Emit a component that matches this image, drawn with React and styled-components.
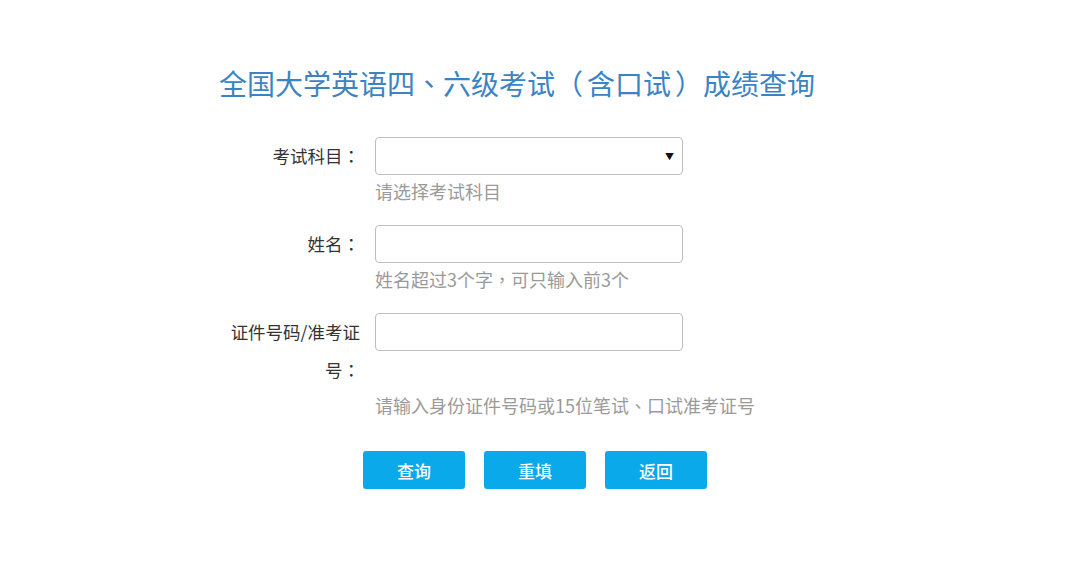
import React from 'react';
import styled, { createGlobalStyle } from 'styled-components';

const GlobalStyle = createGlobalStyle`
  html, body {
    margin: 0;
    padding: 0;
    background: #fff;
  }
  body {
    font-family: "Noto Sans CJK SC", "Liberation Sans", sans-serif;
  }
`;

// centred full-width punctuation, as in the reference's font
const Punct = styled.span`
  font-family: "Noto Sans CJK TC", "Noto Sans CJK SC", sans-serif;
  line-height: 1;
`;

// full-width brackets get a little air on their inner side
const Paren = styled.span`
  ${p => (p.$close ? 'padding-left: 4px;' : 'padding-right: 4px;')}
`;

const Page = styled.div`
  width: 640px;
  margin: 0 auto;
  padding-top: 63px;
`;

const Title = styled.h1`
  margin: 0 0 34px -1px;
  height: 40px;
  font-size: 28px;
  line-height: 40px;
  font-weight: 400;
  color: #3b84c4;
  white-space: nowrap;
`;

const Row = styled.div`
  display: grid;
  grid-template-columns: 140px 308px;
  column-gap: 15px;
  align-items: start;
`;

const Label = styled.label`
  text-align: right;
  font-size: 17.5px;
  line-height: 38px;
  color: #333;
`;

const Field = styled.div`
  position: relative;
`;

const Input = styled.input`
  box-sizing: border-box;
  display: block;
  width: 100%;
  height: 38px;
  border: 1px solid #bdbdbd;
  border-radius: 4px;
  padding: 0 10px;
  font-size: 16px;
  outline: none;
  background: #fff;
`;

const Select = styled.select`
  box-sizing: border-box;
  display: block;
  width: 100%;
  height: 38px;
  border: 1px solid #bdbdbd;
  border-radius: 4px;
  padding: 0 10px;
  font-size: 16px;
  background: #fff;
  appearance: none;
  outline: none;
`;

const Arrow = styled.span`
  position: absolute;
  right: 9px;
  top: 50%;
  transform: translateY(-50%);
  font-size: 9px;
  color: #111;
  pointer-events: none;
`;

const Hint = styled.div`
  height: 20px;
  margin: 6px 0 ${p => p.$after}px 155px;
  font-size: 18px;
  line-height: 20px;
  color: #9a9a9a;
  white-space: nowrap;
`;

const Buttons = styled.div`
  display: flex;
  gap: 19px;
  padding-left: 143px;
`;

const Button = styled.button`
  width: 102px;
  height: 38px;
  border: none;
  border-radius: 3px;
  background: #0aa9ea;
  color: #fff;
  font-family: inherit;
  font-size: 17px;
  font-weight: 500;
  cursor: pointer;
`;

export default function App() {
  return (
    <>
      <GlobalStyle />
      <Page>
        <Title>
          全国大学英语四<Punct>、</Punct>六级考试<Paren>（</Paren>含口试<Paren $close>）</Paren>成绩查询
        </Title>

        <Row>
          <Label>考试科目<Punct>：</Punct></Label>
          <Field>
            <Select defaultValue="">
              <option value=""></option>
            </Select>
            <Arrow>▼</Arrow>
          </Field>
        </Row>
        <Hint $after={24}>请选择考试科目</Hint>

        <Row>
          <Label>姓名<Punct>：</Punct></Label>
          <Field>
            <Input type="text" />
          </Field>
        </Row>
        <Hint $after={24}>姓名超过3个字<Punct>，</Punct>可只输入前3个</Hint>

        <Row>
          <Label>证件号码/准考证号<Punct>：</Punct></Label>
          <Field>
            <Input type="text" />
          </Field>
        </Row>
        <Hint $after={36}>请输入身份证件号码或15位笔试<Punct>、</Punct>口试准考证号</Hint>

        <Buttons>
          <Button>查询</Button>
          <Button>重填</Button>
          <Button>返回</Button>
        </Buttons>
      </Page>
    </>
  );
}
